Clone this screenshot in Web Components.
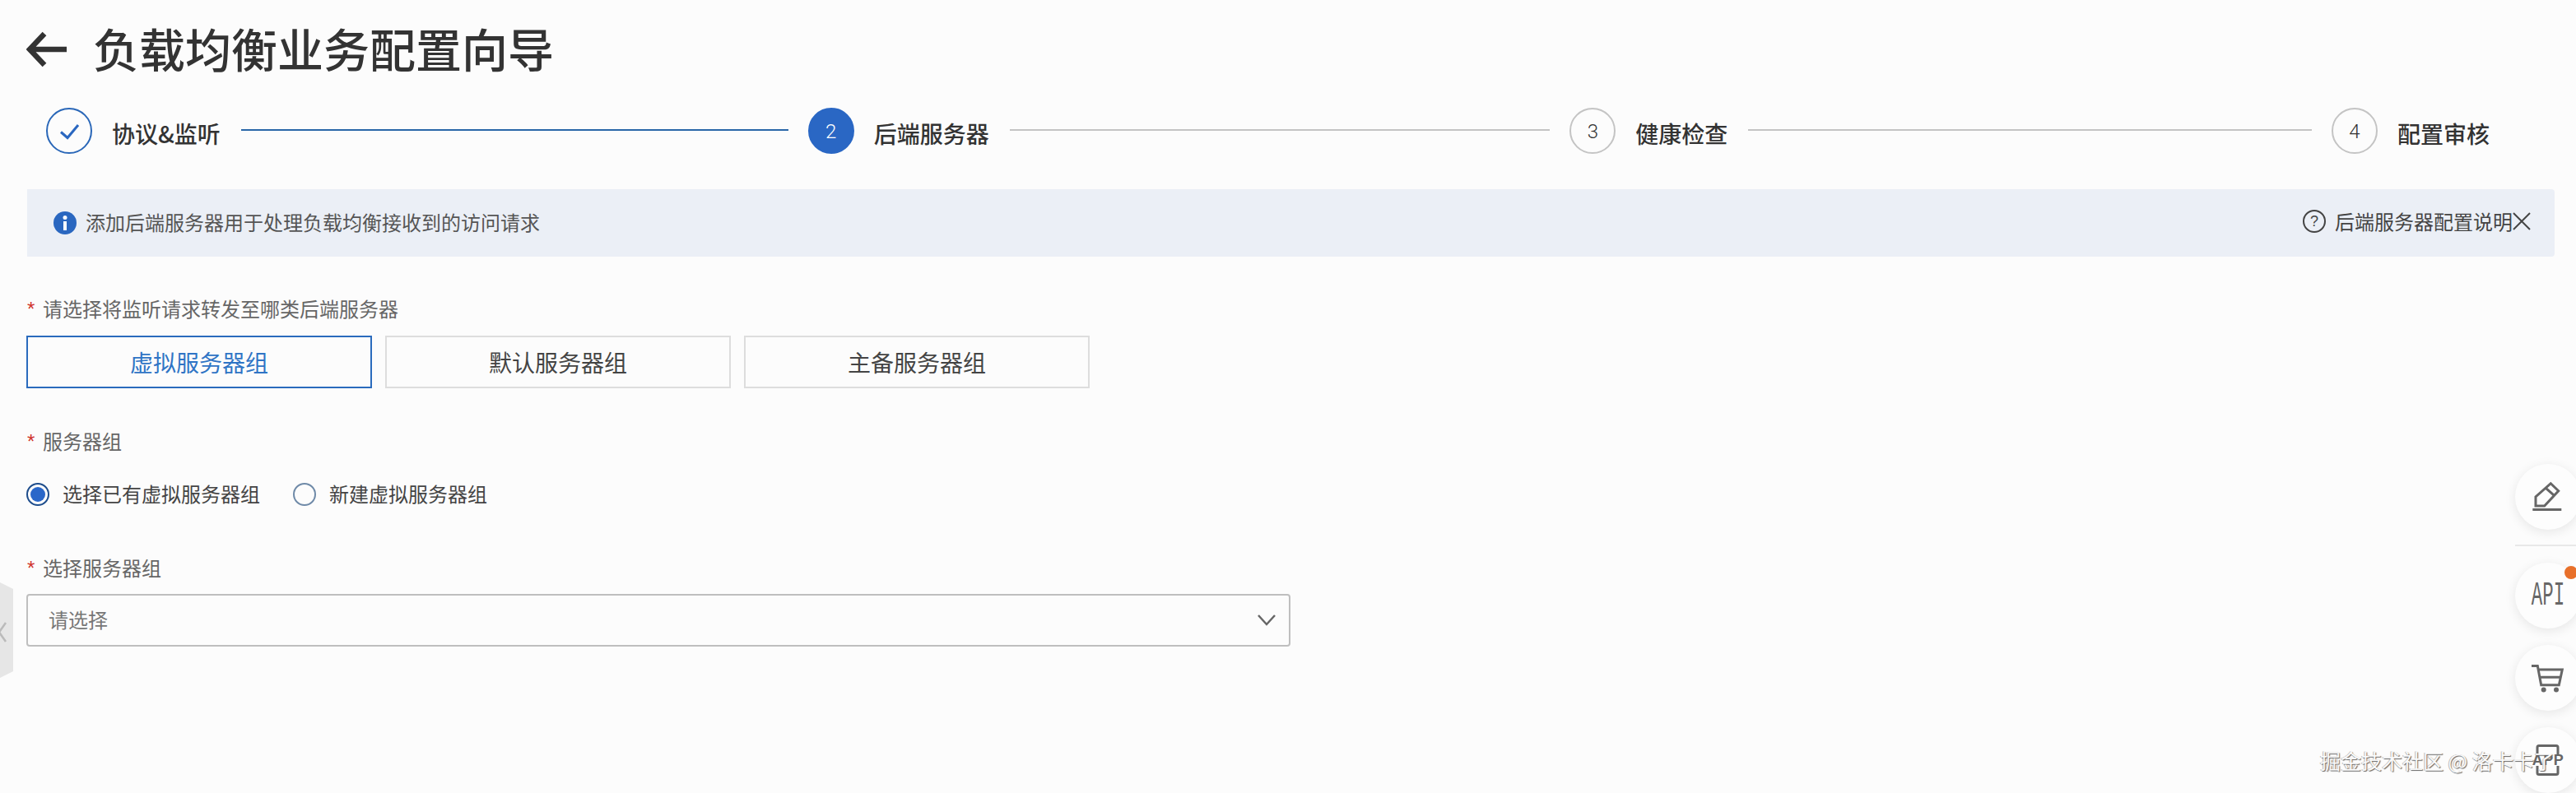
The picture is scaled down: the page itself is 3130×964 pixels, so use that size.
<!DOCTYPE html>
<html lang="zh-CN">
<head>
<meta charset="utf-8">
<title>负载均衡业务配置向导</title>
<style>
  html,body{margin:0;padding:0;height:964px;overflow:hidden;background:#fcfcfc;}
  body{position:relative;font-family:"Noto Sans CJK SC","Noto Sans",sans-serif;color:#333;}
  main{display:block;padding:0 26px 0 32px;}
</style>
</head>
<body>
<main>
  <wizard-header>负载均衡业务配置向导</wizard-header>
  <wizard-steps>
    <wizard-step state="done">协议&amp;监听</wizard-step>
    <wizard-step state="active" num="2">后端服务器</wizard-step>
    <wizard-step num="3">健康检查</wizard-step>
    <wizard-step num="4" last>配置审核</wizard-step>
  </wizard-steps>
  <info-alert link="后端服务器配置说明">添加后端服务器用于处理负载均衡接收到的访问请求</info-alert>
  <form-field label="请选择将监听请求转发至哪类后端服务器" gap="16" top="48">
    <option-cards>
      <option-card selected>虚拟服务器组</option-card>
      <option-card>默认服务器组</option-card>
      <option-card>主备服务器组</option-card>
    </option-cards>
  </form-field>
  <form-field label="服务器组" gap="34" top="49">
    <radio-group>
      <radio-option checked>选择已有虚拟服务器组</radio-option>
      <radio-option>新建虚拟服务器组</radio-option>
    </radio-group>
  </form-field>
  <form-field label="选择服务器组" gap="15" top="60">
    <select-box>请选择</select-box>
  </form-field>
</main>
<side-handle></side-handle>
<float-tools></float-tools>
<water-mark>掘金技术社区 @ 洛卡卡了</water-mark>

<script>
function def(name, css, html){
  customElements.define(name, class extends HTMLElement{
    constructor(){
      super();
      const r=this.attachShadow({mode:'open'});
      const h=typeof html==='function'?html(this):html;
      r.innerHTML='<style>'+css+'</style>'+h;
    }
  });
}
def('wizard-header',
 `:host{display:flex;align-items:center;height:120px;gap:31px;font-size:56px;font-weight:500;color:#333;line-height:1;}
  svg{display:block;width:50px;height:44px;flex:none;}
  .t{margin-top:-4px;}`,
 `<svg viewBox="0 0 50 44" fill="none" stroke="#333" stroke-width="6.5"><path d="M22 3 4 22l18 19M5 22h44"/></svg><span class="t"><slot></slot></span>`);

def('wizard-steps',
 `:host{display:flex;align-items:center;height:56px;margin-top:11px;padding-left:24px;padding-right:79px;}`,
 `<slot></slot>`);

def('wizard-step',
 `:host{display:flex;align-items:center;flex:1 1 0;min-width:0;}
  :host([last]){flex:none;}
  .c{box-sizing:border-box;width:56px;height:56px;border-radius:50%;border:2px solid #c4c4c4;display:flex;align-items:center;justify-content:center;
     font:300 24px/1 Roboto,sans-serif;color:#333;flex:none;padding-top:1px;}
  :host([state=done]) .c{border-color:#2a67b8;}
  :host([state=active]) .c{background:#2a67c4;border-color:#2a67c4;color:#fff;}
  .t{font-size:28px;font-weight:500;line-height:32px;color:#333;margin-left:24px;padding-top:6px;white-space:nowrap;flex:none;}
  .l{flex:1;height:2px;margin:-2px 24px 0 25px;background:#c4c4c4;}
  :host([state=done]) .l{background:#2a67a8;}
  :host([last]) .l{display:none;}
  svg{display:block;width:26px;height:20px;}`,
 el=>{
   const n=el.getAttribute('state')==='done'
     ? `<svg viewBox="0 0 26 20" fill="none" stroke="#2a67c0" stroke-width="3"><path d="M3 10.500 l8 7 L24 2"/></svg>`
     : el.getAttribute('num');
   return `<span class="c">${n}</span><span class="t"><slot></slot></span><span class="l"></span>`;
 });

def('info-alert',
 `:host{display:flex;align-items:center;justify-content:space-between;height:82px;margin-top:43px;background:#ebeff6;border-radius:0 4px 4px 0;
        padding:0 29px 0 32px;font-size:24px;line-height:32px;color:#555;margin-left:1px;}
  .s{display:flex;align-items:center;}
  .i{width:28px;height:28px;flex:none;margin-right:11px;display:block;}
  .m{margin-top:-3px;}
  .q{width:28px;height:28px;box-sizing:border-box;border:2px solid #444;border-radius:50%;display:flex;align-items:center;justify-content:center;
     font:400 18px/1 "Liberation Sans",sans-serif;color:#444;margin-right:11px;}
  .x{width:22px;height:22px;display:block;}
  .r{margin-top:-4px;color:#444;}`,
 el=>`<span class="s"><svg class="i" viewBox="0 0 28 28"><circle cx="14" cy="14" r="14" fill="#2a67c0"/><rect x="12" y="12" width="4" height="11" fill="#fff"/><circle cx="14" cy="7.500" r="2.500" fill="#fff"/></svg><span class="m"><slot></slot></span></span>
  <span class="s r"><span class="q">?</span><span>${el.getAttribute('link')}</span><svg class="x" viewBox="0 0 22 22" fill="none" stroke="#444" stroke-width="2"><path d="M1 1l20 20M21 1 1 21"/></svg></span>`);

def('form-field',
 `:host{display:block;}
  .lab{display:flex;height:32px;line-height:30px;font-size:24px;color:#666;}
  .st{width:20px;flex:none;color:#d0342c;font:400 24px/32px "Liberation Sans",sans-serif;padding-left:1px;box-sizing:border-box;}`,
 el=>`<div class="lab" style="margin-top:${el.getAttribute('top')}px;margin-bottom:${el.getAttribute('gap')}px"><span class="st">*</span><span>${el.getAttribute('label')}</span></div><slot></slot>`);

def('option-cards',`:host{display:flex;gap:16px;}`,`<slot></slot>`);
def('option-card',
 `:host{box-sizing:border-box;display:flex;align-items:center;justify-content:center;width:420px;height:64px;border:2px solid #ddd;font-size:28px;color:#444;}
  :host([selected]){border-color:#2a6bbd;color:#2f74c5;}`,
 `<slot></slot>`);

def('radio-group',`:host{display:flex;gap:40px;}`,`<slot></slot>`);
def('radio-option',
 `:host{display:flex;align-items:center;height:28px;font-size:24px;color:#444;}
  .o{box-sizing:border-box;width:28px;height:28px;border-radius:50%;border:2px solid #6f8aa8;margin-right:16px;display:flex;align-items:center;justify-content:center;}
  :host([checked]) .o{border-color:#1e4d8c;}
  :host([checked]) .o::after{content:"";width:18px;height:18px;border-radius:50%;background:#2a67c9;}
  .m{margin-top:-3px;}`,
 `<span class="o"></span><span class="m"><slot></slot></span>`);

def('select-box',
 `:host{box-sizing:border-box;display:flex;align-items:center;justify-content:space-between;width:1536px;height:64px;border:2px solid #bfbfbf;border-radius:4px;padding:0 15px 0 25px;font-size:24px;color:#777;}
  svg{width:24px;height:16px;display:block;}
  .m{margin-top:-3px;}`,
 `<span class="m"><slot></slot></span><svg viewBox="0 0 24 16" fill="none" stroke="#666" stroke-width="2.500"><path d="M2 2l10 11L22 2"/></svg>`);

def('side-handle',
 `:host{position:absolute;left:0;top:708px;width:16px;height:116px;display:block;}
  svg{display:block;width:16px;height:116px;}`,
 `<svg viewBox="0 0 16 116"><path d="M0 0l16 8v100L0 116z" fill="#e6e6e6"/><path d="M7 49-1 60.500 7 72" fill="none" stroke="#bbb" stroke-width="2.500"/></svg>`);

def('float-tools',
 `:host{position:absolute;right:-6px;top:564px;width:80px;display:flex;flex-direction:column;}
  .b{position:relative;width:80px;height:80px;border-radius:50%;background:#fdfdfd;box-shadow:0 3px 14px rgba(0,0,0,.09);margin-bottom:20px;flex:none;}
  .b svg{position:absolute;inset:0;width:80px;height:80px;display:block;}
  .d{height:2px;background:#e8e8e8;margin:-2px 0 20px;}
  .api{position:absolute;left:0;right:0;top:21px;text-align:center;font:400 40px/40px "Liberation Mono",monospace;color:#666;transform:scaleX(.56);}
  .dot{position:absolute;left:60px;top:4px;width:16px;height:16px;border-radius:50%;background:#e8702a;}
  .app{position:absolute;left:19px;top:30px;width:42px;text-align:center;font:700 18px/20px "Liberation Sans",sans-serif;color:#666;letter-spacing:.5px;}`,
 `<div class="b"><svg viewBox="0 0 80 80" fill="none" stroke="#666" stroke-width="3"><path d="M25 51V40L43.300 23.700 52.700 32.700 35.700 51ZM37.300 29.300 46.700 37.700"/><path d="M21.300 55.500H56.300"/></svg></div>
  <div class="d"></div>
  <div class="b"><span class="api">API</span><span class="dot"></span></div>
  <div class="b"><svg viewBox="0 0 80 80" fill="none" stroke="#666" stroke-width="3"><path d="M20 25.500H27.300L31.700 48.700H53.300L57.300 30H29M30 39.300H55"/><circle cx="34.700" cy="54.500" r="3" fill="#666" stroke="none"/><circle cx="50" cy="54.500" r="3" fill="#666" stroke="none"/></svg></div>
  <div class="b"><svg viewBox="0 0 80 80" fill="none" stroke="#666" stroke-width="3"><path d="M27 33V24.500a2 2 0 0 1 2-2H50a2 2 0 0 1 2 2V33M27 47v8.500a2 2 0 0 0 2 2H50a2 2 0 0 0 2-2V47"/></svg><span class="app">APP</span></div>`);

def('water-mark',
 `:host{position:absolute;left:2819px;top:907px;font-size:25px;line-height:34px;font-family:"Noto Sans CJK SC",sans-serif;color:#fafafa;white-space:nowrap;
   text-shadow:1px 1px 1px #666,-1px 0 0 #bbb;}`,
 `<slot></slot>`);
</script>
</body>
</html>
